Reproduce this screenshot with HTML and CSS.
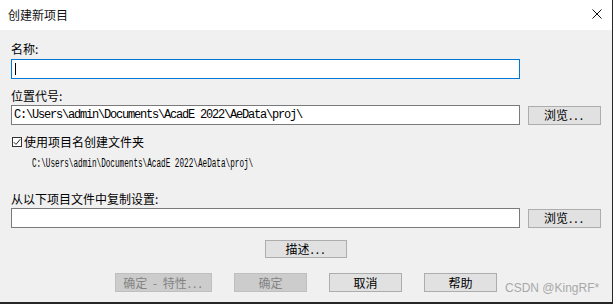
FILE: index.html
```html
<!DOCTYPE html>
<html lang="zh-CN">
<head>
  <meta charset="UTF-8" />
  <title>创建新项目</title>
  <link rel="stylesheet" href="styles.css">
</head>
<body>
  <div class="dialog">
    <div class="titlebar">
      <span class="title">创建新项目</span>
      <svg class="close" width="10" height="10" viewBox="0 0 10 10">
        <path d="M0.5 0.5 L9.5 9.5 M9.5 0.5 L0.5 9.5" stroke="#111" stroke-width="1" fill="none" />
      </svg>
    </div>

    <div class="content">
      <div class="label first">名称:</div>
      <div class="field focused"><span class="caret"></span></div>

      <div class="label">位置代号:</div>
      <div class="row">
        <div class="field mono">C:\Users\admin\Documents\AcadE 2022\AeData\proj\</div>
        <button class="btn browse">浏览<span class="dots">...</span></button>
      </div>

      <label class="check">
        <span class="box">
          <svg width="8" height="8" viewBox="0 0 8 8">
            <path d="M0.8 4.2 L3 6.4 L7.3 1.2" stroke="#222" stroke-width="1" fill="none" />
          </svg>
        </span>
        使用项目名创建文件夹
      </label>
      <div class="path"><span>C:\Users\admin\Documents\AcadE 2022\AeData\proj\</span></div>

      <div class="label copy">从以下项目文件中复制设置:</div>
      <div class="row">
        <div class="field"></div>
        <button class="btn browse">浏览<span class="dots">...</span></button>
      </div>

      <div class="center">
        <button class="btn describe">描述<span class="dots">...</span></button>
      </div>

      <div class="actions">
        <button class="btn wide" disabled>确定 - 特性<span class="dots">...</span></button>
        <button class="btn" disabled>确定</button>
        <button class="btn">取消</button>
        <button class="btn">帮助</button>
        <span class="mark">CSDN @KingRF*</span>
      </div>
    </div>
  </div>
</body>
</html>
```

FILE: styles.css
```css
* {
  margin: 0;
  padding: 0;
  box-sizing: border-box;
}
html, body {
  width: 613px;
  height: 304px;
  background: #f0f0f0;
  overflow: hidden;
}
body {
  font-family: "Noto Sans CJK SC", "Noto Sans", sans-serif;
  font-size: 12px;
  color: #000;
}
.dialog {
  width: 613px;
  height: 304px;
  background: #f0f0f0;
  border-right: 1px solid #262626;
  border-bottom: 2px solid #262626;
}
.titlebar {
  height: 30px;
  background: #fff;
  display: flex;
  align-items: center;
  justify-content: space-between;
  padding: 0 10px 1px 8px;
}
.title {
  font-size: 12px;
  line-height: 14px;
  color: #111;
}
.close {
  display: block;
  margin-top: -1px;
}
.content {
  padding: 0 0 0 11px;
}
.label {
  line-height: 14px;
  height: 14px;
  margin-top: 10px;
}
.label.first {
  margin-top: 12px;
}
.label.copy {
  margin-top: 21px;
}
.field {
  width: 509px;
  height: 20px;
  background: #fff;
  border: 1px solid #7a7a7a;
  display: flex;
  align-items: center;
  padding-left: 2px;
}
.label + .field {
  margin-top: 3px;
}
.field.focused {
  border-color: #0078d7;
}
.caret {
  display: block;
  width: 1px;
  height: 12px;
  background: #000;
  margin-left: 1px;
}
.mono {
  font-family: "Liberation Mono", monospace;
  font-size: 12px;
  letter-spacing: -1.2px;
  line-height: 14px;
}
.row {
  display: flex;
  align-items: center;
  gap: 8px;
  margin-top: 2px;
}
.btn {
  font-family: "Noto Sans CJK SC", "Noto Sans", sans-serif;
  font-size: 12px;
  line-height: 14px;
  width: 73px;
  height: 19px;
  background: #e1e1e1;
  border: 1px solid #adadad;
  color: #000;
  display: flex;
  align-items: center;
  justify-content: center;
  white-space: pre;
}
.dots {
  letter-spacing: 2px;
  margin-left: 1px;
}
.btn:disabled {
  background: #cccccc;
  border-color: #bfbfbf;
  color: #838383;
}
.btn.wide {
  width: 97px;
  word-spacing: 3px;
}
.check {
  display: flex;
  align-items: center;
  gap: 2px;
  margin-top: 10px;
  line-height: 14px;
  margin-left: 1px;
}
.box {
  width: 10px;
  height: 10px;
  border: 1px solid #333;
  background: #fff;
  display: flex;
  align-items: center;
  justify-content: center;
}
.box svg {
  display: block;
}
.path {
  font-family: "Liberation Mono", monospace;
  font-size: 12px;
  line-height: 14px;
  margin: 8px 0 0 21px;
  white-space: pre;
}
.path span {
  display: inline-block;
  transform: scaleX(0.64);
  transform-origin: left center;
}
.center {
  display: flex;
  justify-content: center;
  margin-top: 12px;
  padding-right: 11px;
}
.describe {
  width: 82px;
  height: 18px;
}
.actions {
  display: flex;
  align-items: flex-end;
  gap: 22px;
  margin: 15px 0 0 104px;
}
.mark {
  font-family: "Liberation Sans", Arial, sans-serif;
  font-size: 12px;
  color: #a8a8a8;
  line-height: 12px;
  margin: 0 0 -2px -14px;
}
```
